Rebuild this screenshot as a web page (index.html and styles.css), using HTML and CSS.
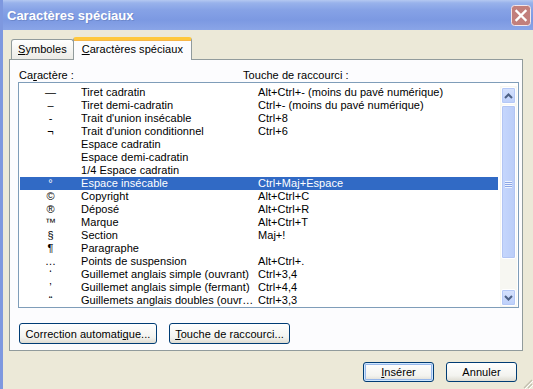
FILE: index.html
```html
<!DOCTYPE html>
<html>
<head>
    <title>Caractères spéciaux</title>
    <link rel="stylesheet" href="styles.css">
</head>
<body>
<div class="window">
    <div class="titlebar">
        <span class="title">Caractères spéciaux</span>
        <span class="close">
            <svg width="20" height="21" viewBox="0 0 20 21">
                <rect x="0.5" y="0.5" width="19" height="20" rx="3" fill="#c27f7c" stroke="#f2e6ea"/>
                <path d="M5.5 6 L14.5 15 M14.5 6 L5.5 15" stroke="#ffffff" stroke-width="2.4" stroke-linecap="square"/>
            </svg>
        </span>
    </div>

    <div class="client">
        <div class="tabs">
            <div class="tab"><u>S</u>ymboles</div>
            <div class="tab active"><u>C</u>aractères spéciaux</div>
        </div>

        <div class="panel">
            <div class="headers">
                <span class="h-char">Ca<u>r</u>actère :</span>
                <span>Touche de raccourci :</span>
            </div>

            <div class="listbox">
                <div class="rows">
                    <div class="row"><span class="sym">—</span><span class="name">Tiret cadratin</span><span class="key">Alt+Ctrl+- (moins du pavé numérique)</span></div>
                    <div class="row"><span class="sym">–</span><span class="name">Tiret demi-cadratin</span><span class="key">Ctrl+- (moins du pavé numérique)</span></div>
                    <div class="row"><span class="sym">-</span><span class="name">Trait d'union insécable</span><span class="key">Ctrl+8</span></div>
                    <div class="row"><span class="sym">¬</span><span class="name">Trait d'union conditionnel</span><span class="key">Ctrl+6</span></div>
                    <div class="row"><span class="sym"></span><span class="name">Espace cadratin</span><span class="key"></span></div>
                    <div class="row"><span class="sym"></span><span class="name">Espace demi-cadratin</span><span class="key"></span></div>
                    <div class="row"><span class="sym"></span><span class="name">1/4 Espace cadratin</span><span class="key"></span></div>
                    <div class="row selected"><span class="sym">°</span><span class="name">Espace insécable</span><span class="key">Ctrl+Maj+Espace</span></div>
                    <div class="row"><span class="sym">©</span><span class="name">Copyright</span><span class="key">Alt+Ctrl+C</span></div>
                    <div class="row"><span class="sym">®</span><span class="name">Déposé</span><span class="key">Alt+Ctrl+R</span></div>
                    <div class="row"><span class="sym">™</span><span class="name">Marque</span><span class="key">Alt+Ctrl+T</span></div>
                    <div class="row"><span class="sym">§</span><span class="name">Section</span><span class="key">Maj+!</span></div>
                    <div class="row"><span class="sym">¶</span><span class="name">Paragraphe</span><span class="key"></span></div>
                    <div class="row"><span class="sym">…</span><span class="name">Points de suspension</span><span class="key">Alt+Ctrl+.</span></div>
                    <div class="row"><span class="sym">‘</span><span class="name">Guillemet anglais simple (ouvrant)</span><span class="key">Ctrl+3,4</span></div>
                    <div class="row"><span class="sym">’</span><span class="name">Guillemet anglais simple (fermant)</span><span class="key">Ctrl+4,4</span></div>
                    <div class="row"><span class="sym">“</span><span class="name">Guillemets anglais doubles (ouvrant)</span><span class="key">Ctrl+3,3</span></div>
                </div>
                <div class="scrollbar">
                    <div class="sb-btn">
                        <svg width="9" height="6" viewBox="0 0 9 6"><path d="M1 5 L4.5 1.5 L8 5" fill="none" stroke="#4d6185" stroke-width="2"/></svg>
                    </div>
                    <div class="sb-thumb">
                        <span class="grip"></span>
                    </div>
                    <div class="sb-track"></div>
                    <div class="sb-btn">
                        <svg width="9" height="6" viewBox="0 0 9 6"><path d="M1 1 L4.5 4.5 L8 1" fill="none" stroke="#4d6185" stroke-width="2"/></svg>
                    </div>
                </div>
            </div>

            <div class="panel-buttons">
                <button class="btn btn-auto">Correction automati<u>q</u>ue...</button>
                <button class="btn btn-key"><u>T</u>ouche de raccourci...</button>
            </div>
        </div>

        <div class="dialog-buttons">
            <button class="btn btn-default"><u>I</u>nsérer</button>
            <button class="btn">Annuler</button>
        </div>

        <svg class="grip-corner" width="12" height="12" viewBox="0 0 12 12">
            <path d="M11 3 L3 11 M11 7 L7 11" stroke="#c2bfae" stroke-width="1.2"/>
            <path d="M12 4 L4 12 M12 8 L8 12" stroke="#ffffff" stroke-width="1"/>
        </svg>
    </div>
</div>
</body>
</html>
```

FILE: styles.css
```css
body {
    margin: 0;
    font-family: "Liberation Sans", Arial, sans-serif;
    font-size: 11px;
    letter-spacing: 0.05px;
    color: #000;
    background: #ece9d8;
}

.window {
    width: 530px;
    height: 389px;
    border-left: 3px solid #7e98df;
    display: flex;
    flex-direction: column;
    overflow: hidden;
}

.titlebar {
    height: 30px;
    display: flex;
    align-items: center;
    justify-content: space-between;
    padding: 0 2px 0 4px;
    background: linear-gradient(#b4c8f1 0px, #98b2eb 3px, #86a2e6 10px, #7c99e2 20px, #8aa5e7 30px);
}

.title {
    color: #fff;
    font-weight: bold;
    font-size: 13px;
    letter-spacing: 0;
    text-shadow: 1px 1px 0 #6d88cc;
}

.close {
    display: flex;
    margin-top: 1px;
}

.client {
    flex: 1;
    position: relative;
    background: #ece9d8;
}

.tabs {
    display: flex;
    align-items: flex-end;
    height: 22px;
    margin: 7px 0 0 8px;
}

.tab {
    height: 19px;
    line-height: 19px;
    padding: 0 6px;
    border: 1px solid #919b9c;
    border-bottom: none;
    border-radius: 3px 3px 0 0;
    background: linear-gradient(#ffffff, #ecebe6);
}

.tab.active {
    height: 20px;
    line-height: 19px;
    padding: 0 8px;
    margin-left: -1px;
    margin-bottom: -1px;
    border-top: 3px solid #ffc83c;
    box-shadow: inset 0 1px 0 #f7b64a;
    background: #fcfcfe;
    position: relative;
    z-index: 1;
}

.panel {
    width: 512px;
    height: 290px;
    margin-left: 6px;
    border: 1px solid #919b9c;
    background: #fcfcfe;
}

.headers {
    display: flex;
    height: 13px;
    line-height: 13px;
    padding: 9px 0 0 9px;
}

.h-char {
    width: 224px;
}

.listbox {
    display: flex;
    width: 497px;
    margin-left: 8px;
    padding: 3px 1px 0 1px;
    border: 1px solid #7f9db9;
    background: #fff;
}

.rows {
    flex: 1;
    margin-right: 2px;
}

.row {
    display: flex;
    height: 13px;
    line-height: 13px;
    white-space: nowrap;
}

.row.selected {
    background: #316ac5;
    color: #fff;
}

.sym {
    width: 61px;
    text-align: center;
    letter-spacing: 0;
}

.name {
    width: 174px;
    margin-right: 3px;
    overflow: hidden;
    text-overflow: ellipsis;
}

.key {
    flex: 1;
}

.scrollbar {
    width: 17px;
    display: flex;
    flex-direction: column;
    background: #f7f7f2;
}

.sb-btn {
    height: 15px;
    margin: 1px;
    display: flex;
    align-items: center;
    justify-content: center;
    border: 1px solid #fff;
    border-radius: 2px;
    background: linear-gradient(#d6e2fd, #bccffa);
    box-shadow: 0 0 0 1px #b4c8f6 inset;
}

.sb-thumb {
    height: 154px;
    margin: 0 1px;
    display: flex;
    align-items: flex-start;
    justify-content: center;
    padding-top: 75px;
    box-sizing: border-box;
    border: 1px solid #fff;
    border-radius: 2px;
    background: linear-gradient(90deg, #c6d7fd, #bacdf8);
    box-shadow: 0 0 0 1px #b2c5f3 inset;
}

.grip {
    width: 7px;
    height: 7px;
    background: repeating-linear-gradient(#eef4fe 0 1px, #8ca6e6 1px 2px);
}

.sb-track {
    flex: 1;
}

.panel-buttons {
    display: flex;
    gap: 12px;
    padding: 15px 0 0 9px;
}

.btn {
    height: 21px;
    padding: 0;
    font-family: "Liberation Sans", Arial, sans-serif;
    font-size: 11px;
    letter-spacing: 0.05px;
    color: #000;
    border: 1px solid #003c74;
    border-radius: 3px;
    background: linear-gradient(#ffffff, #f3f3ef 70%, #dedcd2);
}

.btn-auto {
    width: 138px;
}

.btn-key {
    width: 121px;
}

.dialog-buttons {
    display: flex;
    justify-content: flex-end;
    gap: 12px;
    padding: 11px 16px 0 0;
}

.dialog-buttons .btn {
    width: 71px;
    height: 20px;
}

.btn-default {
    box-shadow: inset 0 0 0 1px #cee7ff, inset 0 0 0 2px #98b8ea;
}

.grip-corner {
    position: absolute;
    right: 0;
    bottom: 0;
}
```
